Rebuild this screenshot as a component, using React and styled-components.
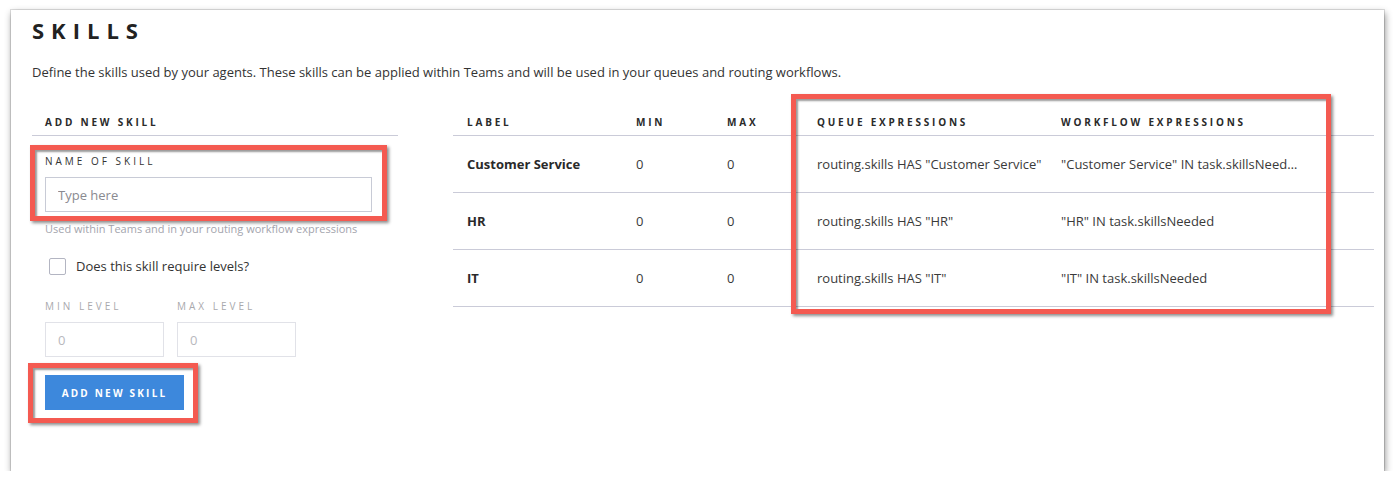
import React from "react";
import styled, { createGlobalStyle } from "styled-components";

const GlobalStyle = createGlobalStyle`
	* { box-sizing: border-box; }
	html, body {
		margin: 0;
		padding: 0;
		background: #ffffff;
		font-family: "Open Sans", "Liberation Sans", sans-serif;
		color: #333333;
	}
`;

const skills = [
	{ label: "Customer Service", min: 0, max: 0 },
	{ label: "HR", min: 0, max: 0 },
	{ label: "IT", min: 0, max: 0 },
];

export default function App() {
	return (
		<>
			<GlobalStyle />
			<Window>
				<Title>SKILLS</Title>
				<Description>
					Define the skills used by your agents. These skills can be applied within Teams and will be used in
					your queues and routing workflows.
				</Description>
				<Columns>
					<FormColumn>
						<SectionHeader>ADD NEW SKILL</SectionHeader>
						<FieldLabel>NAME OF SKILL</FieldLabel>
						<TextInput placeholder="Type here" />
						<Helper>Used within Teams and in your routing workflow expressions</Helper>
						<CheckRow>
							<CheckBox type="checkbox" />
							<span>Does this skill require levels?</span>
						</CheckRow>
						<LevelRow>
							<LevelField>
								<FieldLabel $muted>MIN LEVEL</FieldLabel>
								<LevelInput placeholder="0" />
							</LevelField>
							<LevelField>
								<FieldLabel $muted>MAX LEVEL</FieldLabel>
								<LevelInput placeholder="0" />
							</LevelField>
						</LevelRow>
						<PrimaryButton>ADD NEW SKILL</PrimaryButton>
					</FormColumn>
					<TableColumn>
						<SkillTable>
							<colgroup>
								<col style={{ width: 169 }} />
								<col style={{ width: 91 }} />
								<col style={{ width: 90 }} />
								<col style={{ width: 244 }} />
								<col style={{ width: 327 }} />
							</colgroup>
							<thead>
								<tr>
									<Th>LABEL</Th>
									<Th>MIN</Th>
									<Th>MAX</Th>
									<Th>QUEUE EXPRESSIONS</Th>
									<Th>WORKFLOW EXPRESSIONS</Th>
								</tr>
							</thead>
							<tbody>
								{skills.map((s) => (
									<tr key={s.label}>
										<Td $bold>{s.label}</Td>
										<Td>{s.min}</Td>
										<Td>{s.max}</Td>
										<Td>routing.skills HAS "{s.label}"</Td>
										<Td>
											<Clip>"{s.label}" IN task.skillsNeeded</Clip>
										</Td>
									</tr>
								))}
							</tbody>
						</SkillTable>
					</TableColumn>
				</Columns>

				{/* annotation highlights */}
				<Highlight $left={19} $top={135} $w={357} $h={76} />
				<Highlight $left={17} $top={353} $w={170} $h={60} />
				<Highlight $left={780} $top={84} $w={540} $h={220} />
			</Window>
		</>
	);
}

const Window = styled.div`
	position: relative;
	margin: 10px 0 0 11px;
	width: 1373px;
	height: 461px;
	overflow: visible;
	padding: 5px 10px 0 21px;
	background: #ffffff;
	box-shadow: 0 0 0 1px rgba(0, 0, 0, 0.12), 1px 3px 7px rgba(0, 0, 0, 0.45);
`;

const Title = styled.h1`
	margin: 0;
	font-size: 22px;
	line-height: 30px;
	font-weight: 700;
	letter-spacing: 7px;
	color: #222222;
`;

const Description = styled.p`
	margin: 18px 0 0;
	font-size: 13px;
	line-height: 18px;
	color: #333333;
`;

const Columns = styled.div`
	display: flex;
	align-items: flex-start;
	gap: 55px;
	margin-top: 34px;
`;

const FormColumn = styled.div`
	width: 366px;
	display: flex;
	flex-direction: column;
	align-items: flex-start;
`;

const SectionHeader = styled.div`
	align-self: stretch;
	padding: 0 0 6px 13px;
	font-size: 10px;
	line-height: 14px;
	font-weight: 700;
	letter-spacing: 2.8px;
	color: #2a2a2a;
	border-bottom: 1px solid #cacbd8;
`;

const FieldLabel = styled.label`
	display: block;
	margin: ${(p) => (p.$muted ? "0" : "18px 0 0 13px")};
	font-size: 10px;
	line-height: 14px;
	letter-spacing: 3px;
	color: ${(p) => (p.$muted ? "#a9a9ad" : "#333333")};
`;

const TextInput = styled.input`
	margin: 9px 0 0 13px;
	width: 327px;
	height: 35px;
	padding: 0 12px;
	border: 1px solid #c8cbd6;
	border-radius: 0;
	font-family: inherit;
	font-size: 13px;
	color: #333333;
	outline: none;
	&::placeholder {
		color: #8a8a90;
	}
`;

const Helper = styled.div`
	margin: 9px 0 0 13px;
	font-size: 11px;
	line-height: 15px;
	color: #a3a4ad;
`;

const CheckRow = styled.label`
	display: flex;
	align-items: center;
	gap: 10px;
	margin: 22px 0 0 17px;
	font-size: 13px;
	line-height: 17px;
	color: #333333;
`;

const CheckBox = styled.input`
	appearance: none;
	margin: 0;
	width: 17px;
	height: 17px;
	border: 1px solid #b3b5c2;
	border-radius: 2px;
	background: #ffffff;
`;

const LevelRow = styled.div`
	display: flex;
	gap: 13px;
	margin: 24px 0 0 13px;
`;

const LevelField = styled.div`
	display: flex;
	flex-direction: column;
	gap: 9px;
`;

const LevelInput = styled.input`
	width: 119px;
	height: 35px;
	padding: 0 12px;
	border: 1px solid #e1e2e8;
	font-family: inherit;
	font-size: 13px;
	outline: none;
	&::placeholder {
		color: #b8b8bd;
	}
`;

const PrimaryButton = styled.button`
	margin: 18px 0 0 13px;
	width: 139px;
	height: 35px;
	border: none;
	background: #3d88dc;
	color: #ffffff;
	font-family: inherit;
	font-size: 10px;
	font-weight: 700;
	letter-spacing: 2.2px;
	cursor: pointer;
`;

const TableColumn = styled.div`
	flex: 1;
`;

const SkillTable = styled.table`
	width: 921px;
	border-collapse: collapse;
	table-layout: fixed;
`;

const Th = styled.th`
	padding: 0 14px 6px;
	text-align: left;
	vertical-align: bottom;
	font-size: 10px;
	line-height: 14px;
	font-weight: 700;
	letter-spacing: 2.8px;
	color: #2a2a2a;
	white-space: nowrap;
	border-bottom: 1px solid #cacbd8;
`;

const Td = styled.td`
	height: 57px;
	padding: 0 14px;
	font-size: 13px;
	font-weight: ${(p) => (p.$bold ? 700 : 400)};
	color: ${(p) => (p.$bold ? "#2a2a2a" : "#3a3a3a")};
	white-space: nowrap;
	vertical-align: middle;
	border-bottom: 1px solid #cacbd8;
`;

const Clip = styled.span`
	display: block;
	max-width: 241px;
	overflow: hidden;
	text-overflow: ellipsis;
`;

const Highlight = styled.div`
	position: absolute;
	left: ${(p) => p.$left}px;
	top: ${(p) => p.$top}px;
	width: ${(p) => p.$w}px;
	height: ${(p) => p.$h}px;
	border: 5px solid #f45a51;
	box-shadow: 2px 2px 3px rgba(0, 0, 0, 0.45), inset 2px 2px 2px rgba(0, 0, 0, 0.4);
	pointer-events: none;
`;
